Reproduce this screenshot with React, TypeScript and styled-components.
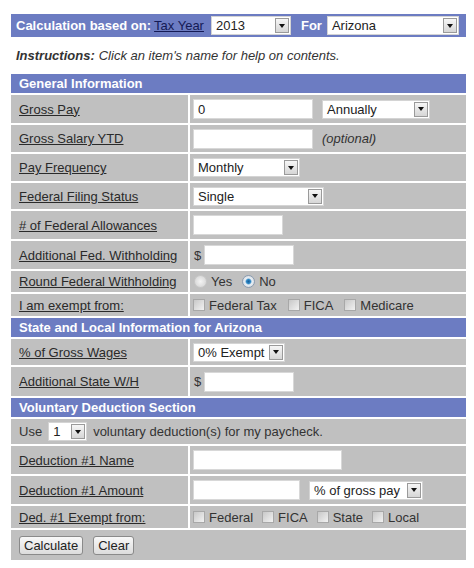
import React from 'react'
import styled, { createGlobalStyle } from 'styled-components'

const GlobalStyle = createGlobalStyle`
  body {
    margin: 0;
    background: #fff;
    font-family: Arial, 'Liberation Sans', sans-serif;
    font-size: 13px;
    color: #222;
  }
`

const Page = styled.div`
  width: 455px;
  padding: 14px 0 0 11px;
`

const TopBar = styled.div`
  display: flex;
  align-items: center;
  height: 23px;
  padding-left: 5px;
  background: #6c7cc2;
  color: #fff;
  font-weight: bold;
`

const TopLink = styled.a`
  margin: 0 7px 0 3px;
  color: #141a55;
  font-weight: normal;
  text-decoration: underline;
`

const ForLabel = styled.span`
  margin: 0 5px 0 10px;
`

const Instructions = styled.div`
  height: 37px;
  display: flex;
  align-items: center;
  padding-left: 5px;
  font-style: italic;
  color: #333;

  b {
    margin-right: 4px;
  }
`

const Grid = styled.div`
  display: grid;
  grid-template-columns: 177px 276px;
  gap: 2px;
`

const SectionHeader = styled.div`
  grid-column: 1 / -1;
  height: 19px;
  display: flex;
  align-items: center;
  padding-left: 8px;
  background: #6c7cc2;
  color: #fff;
  font-weight: bold;
`

const LabelCell = styled.div<{ $h: number }>`
  height: ${({ $h }) => $h}px;
  display: flex;
  align-items: center;
  padding-left: 8px;
  background: #c0c0c0;

  a {
    color: #2a2a2a;
    text-decoration: underline;
  }
`

const ValueCell = styled.div<{ $h: number; $span?: boolean; $gap?: number }>`
  height: ${({ $h }) => $h}px;
  grid-column: ${({ $span }) => ($span ? '1 / -1' : 'auto')};
  display: flex;
  align-items: center;
  gap: ${({ $gap }) => $gap ?? 9}px;
  padding-left: ${({ $span }) => ($span ? '8px' : '3px')};
  background: #c0c0c0;
  color: #333;
`

const TextInput = styled.input<{ $w: number }>`
  width: ${({ $w }) => $w}px;
  height: 20px;
  box-sizing: border-box;
  border: 1px solid #d8d8d8;
  background: #fff;
  padding: 0 4px;
  font: 13px Arial, 'Liberation Sans', sans-serif;
  color: #222;
  outline: none;
`

const Dollar = styled.span`
  display: inline-flex;
  align-items: center;
  gap: 3px;
  margin-left: 1px;
`

const SelectBox = styled.div<{ $w: number }>`
  width: ${({ $w }) => $w}px;
  height: 19px;
  box-sizing: border-box;
  display: flex;
  align-items: center;
  justify-content: space-between;
  background: #fff;
  border: 1px solid #d4d4d4;
  padding-left: 4px;
  color: #222;
  font-weight: normal;
  font-size: 13px;
`

const Arrow = styled.span`
  width: 14px;
  height: 15px;
  margin-right: 1px;
  box-sizing: border-box;
  border: 1px solid #9a9a9a;
  background: linear-gradient(#f6f6f6, #d6d6d6);
  display: flex;
  align-items: center;
  justify-content: center;

  &::after {
    content: '';
    border-left: 3px solid transparent;
    border-right: 3px solid transparent;
    border-top: 4px solid #111;
  }
`

const Note = styled.span`
  font-style: italic;
  color: #333;
`

const Choice = styled.label`
  display: inline-flex;
  align-items: center;
  gap: 4px;
  color: #333;
`

const Box = styled.span`
  width: 12px;
  height: 12px;
  box-sizing: border-box;
  border: 1px solid #a8a8a8;
  background: linear-gradient(135deg, #c8c8c8, #f2f2f2);
`

const Radio = styled.span<{ $on?: boolean }>`
  width: 13px;
  height: 13px;
  border-radius: 50%;
  box-sizing: border-box;
  border: 1px solid ${({ $on }) => ($on ? '#8a9bb0' : '#c8c8c8')};
  background: ${({ $on }) =>
    $on
      ? 'radial-gradient(circle, #1a5f9a 0, #2b86c4 2px, #e8eef4 3.5px, #d8dde2 6px)'
      : 'radial-gradient(circle, #f4f4f4, #d0d0d0)'};
  margin-left: 1px;
`

const Button = styled.button`
  height: 19px;
  padding: 0 4px;
  border: 1px solid #8a8a8a;
  border-radius: 3px;
  background: linear-gradient(#f8f8f8, #dcdcdc);
  font: 13px Arial, 'Liberation Sans', sans-serif;
  color: #222;
`

const Select: React.FC<{ w: number; value: string }> = ({ w, value }) => (
  <SelectBox $w={w}>
    {value}
    <Arrow />
  </SelectBox>
)

const Row: React.FC<{ label: string; h: number; gap?: number; children: React.ReactNode }> = ({
  label,
  h,
  gap,
  children,
}) => (
  <>
    <LabelCell $h={h}>
      <a>{label}</a>
    </LabelCell>
    <ValueCell $h={h} $gap={gap}>
      {children}
    </ValueCell>
  </>
)

const App: React.FC = () => (
  <Page>
    <GlobalStyle />
    <TopBar>
      Calculation based on:
      <TopLink>Tax Year</TopLink>
      <Select w={80} value="2013" />
      <ForLabel>For</ForLabel>
      <Select w={132} value="Arizona" />
    </TopBar>
    <Instructions>
      <b>Instructions:</b> Click an item's name for help on contents.
    </Instructions>
    <Grid>
      <SectionHeader>General Information</SectionHeader>
      <Row label="Gross Pay" h={28}>
        <TextInput $w={120} defaultValue="0" />
        <Select w={108} value="Annually" />
      </Row>
      <Row label="Gross Salary YTD" h={27}>
        <TextInput $w={120} />
        <Note>(optional)</Note>
      </Row>
      <Row label="Pay Frequency" h={27}>
        <Select w={107} value="Monthly" />
      </Row>
      <Row label="Federal Filing Status" h={26}>
        <Select w={131} value="Single" />
      </Row>
      <Row label="# of Federal Allowances" h={28}>
        <TextInput $w={90} />
      </Row>
      <Row label="Additional Fed. Withholding" h={28}>
        <Dollar>
          $<TextInput $w={90} />
        </Dollar>
      </Row>
      <Row label="Round Federal Withholding" h={21} gap={9}>
        <Choice>
          <Radio /> Yes
        </Choice>
        <Choice>
          <Radio $on /> No
        </Choice>
      </Row>
      <Row label="I am exempt from:" h={22} gap={11}>
        <Choice>
          <Box /> Federal Tax
        </Choice>
        <Choice>
          <Box /> FICA
        </Choice>
        <Choice>
          <Box /> Medicare
        </Choice>
      </Row>
      <SectionHeader>State and Local Information for Arizona</SectionHeader>
      <Row label="% of Gross Wages" h={26}>
        <Select w={92} value="0% Exempt" />
      </Row>
      <Row label="Additional State W/H" h={29}>
        <Dollar>
          $<TextInput $w={90} />
        </Dollar>
      </Row>
      <SectionHeader>Voluntary Deduction Section</SectionHeader>
      <ValueCell $h={25} $span $gap={6}>
        Use
        <Select w={39} value="1" />
        voluntary deduction(s) for my paycheck.
      </ValueCell>
      <Row label="Deduction #1 Name" h={28}>
        <TextInput $w={149} />
      </Row>
      <Row label="Deduction #1 Amount" h={28}>
        <TextInput $w={107} />
        <Select w={114} value="% of gross pay" />
      </Row>
      <Row label="Ded. #1 Exempt from:" h={22} gap={9}>
        <Choice>
          <Box /> Federal
        </Choice>
        <Choice>
          <Box /> FICA
        </Choice>
        <Choice>
          <Box /> State
        </Choice>
        <Choice>
          <Box /> Local
        </Choice>
      </Row>
      <ValueCell $h={30} $span $gap={10}>
        <Button>Calculate</Button>
        <Button>Clear</Button>
      </ValueCell>
    </Grid>
  </Page>
)

export default App
